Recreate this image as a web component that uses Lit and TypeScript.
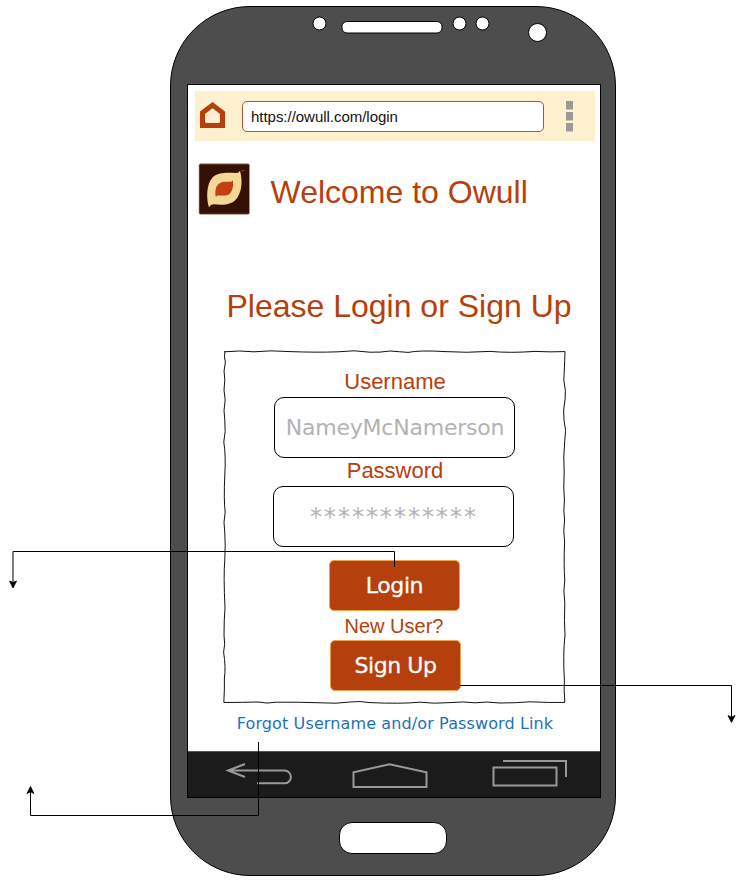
import { LitElement, html, css } from "lit";
import { customElement } from "lit/decorators.js";

@customElement("phone-bezel-top")
class PhoneBezelTop extends LitElement {
  static styles = css`
    :host { display: block; height: 77px; }
    svg { display: block; }
  `;
  render() {
    return html`<svg width="444" height="77" viewBox="171 7 444 77" fill="#fff" stroke="#000">
      <circle cx="319.5" cy="23.5" r="6.5" />
      <rect x="342" y="21.5" width="100" height="11.5" rx="5" />
      <circle cx="459.5" cy="23.5" r="6.5" />
      <circle cx="482.5" cy="23.5" r="6.5" />
      <circle cx="537.5" cy="32.5" r="9" />
    </svg>`;
  }
}

@customElement("address-bar")
class AddressBar extends LitElement {
  static styles = css`
    :host {
      display: flex; align-items: flex-start; box-sizing: border-box;
      width: 400px; height: 50px; margin: 6px 0 0 7px; background: #fff0cf;
    }
    .home { display: block; margin: 11px 0 0 5px; }
    .url {
      box-sizing: border-box; width: 302px; height: 31px; margin: 10px 0 0 17px;
      border: 1px solid #b2542f; border-radius: 5px; background: #fff;
      padding-left: 8px; font: 15px/30px "Liberation Sans", Arial, sans-serif;
      letter-spacing: -0.03px; color: #111;
    }
    .more { display: block; margin: 10px 0 0 22px; }
  `;
  render() {
    return html`
      <svg class="home" width="25" height="26" viewBox="0 0 25 26">
        <path fill="#b5400e" fill-rule="evenodd" d="M12.5 0L25 9.5V26H0V9.5ZM12.5 6.2L5 12V19.6Q5 21 6.5 21H18.5Q20 21 20 19.6V12Z" />
      </svg>
      <div class="url">https://owull.com/login</div>
      <svg class="more" width="7" height="31" viewBox="0 0 7 31" fill="#999">
        <rect y="0" width="7" height="8.5" /><rect y="11" width="7" height="8.5" /><rect y="22" width="7" height="8.5" />
      </svg>`;
  }
}

@customElement("login-panel")
class LoginPanel extends LitElement {
  static styles = css`
    :host {
      display: flex; flex-direction: column; position: relative; box-sizing: border-box;
      width: 343px; height: 354px; margin: 23px 0 0 35px; padding-top: 18px;
      font-family: "Liberation Sans", Arial, sans-serif; color: #b5400e;
    }
    .frame { position: absolute; left: 0; top: 0; }
    .label { width: 344px; text-align: center; font-size: 22px; line-height: 26px; height: 28px; }
    .label.user { height: 29px; line-height: 28px; }
    .label.new { width: 342px; font-size: 20px; height: 29px; line-height: 31px; }
    .field {
      box-sizing: border-box; width: 241px; height: 61px; margin-left: 51px;
      border: 1px solid #000; border-radius: 10px; background: #fff; text-align: center;
      font: 22px/59px "DejaVu Sans", Verdana, sans-serif; letter-spacing: -0.22px; color: #b3b3b3;
      padding-left: 1px;
    }
    .field.secret { margin-left: 50px; font-size: 24px; line-height: 61px; letter-spacing: 2px; }
    .btn {
      box-sizing: border-box; width: 131px; height: 51px; margin-left: 106px;
      border: 1px solid #eba24c; border-radius: 5px; background: #b5400e; text-align: center;
      font: 22px/49px "DejaVu Sans", Verdana, sans-serif; letter-spacing: -0.4px; color: #fff;
      -webkit-text-stroke: 0.3px #fff;
    }
    .btn.login { margin-top: 13px; }
    .btn.signup { margin-left: 107px; }
  `;
  render() {
    return html`
      <svg class="frame" width="343" height="354" viewBox="223 350 343 354" fill="none" stroke="#111" stroke-width="1">
        <path d="M224 351.8Q240 350.2 254 351.8Q270 350 290 351.6Q318 352.6 338 351.8Q354 349.6 370 352.2Q380 352.6 390 351Q400 351.8 408 352.4Q420 350 445 351.6Q466 353 490 351.4Q510 353.2 535 351.4Q550 352.2 565 351.6" />
        <path d="M565 351.6Q564.4 370 563.8 380Q566.4 391 565 400Q562.8 410 564 420Q566.8 431 564.8 440Q563 458 564.2 472Q563.2 488 564.4 500Q563.2 512 564.6 520Q563 530 564.6 542Q563.6 566 564.8 580Q563 590 564.8 603Q564 622 565 635Q562.8 655 564.4 680Q563.8 690 564.8 702" />
        <path d="M224 702.5Q244 702.4 258 702Q267 704 276 702.2Q300 702 320 702.8Q337 704 350 702Q360 700.8 370 702.6Q400 704 420 702.2Q434 704 450 702.6Q463 701.2 475 702.8Q486 701.2 500 703Q516 703 530 701.8Q550 702.8 565 702.4" />
        <path d="M225 351.5Q223.6 357 225.4 362Q223 371 224.8 380Q223 390 225.2 400Q223 411 224.8 420Q226 432 223.8 442Q226 456 224.8 475Q223.6 500 225.2 512Q223 522 224.8 533Q225.6 545 224.8 560Q223.4 575 225 608Q224 620 224 635Q225.6 645 223.6 652Q226 668 224.4 678Q224.6 690 223.8 702.5" />
      </svg>
      <div class="label user">Username</div>
      <div class="field">NameyMcNamerson</div>
      <div class="label">Password</div>
      <div class="field secret">************</div>
      <div class="btn login">Login</div>
      <div class="label new">New User?</div>
      <div class="btn signup">Sign Up</div>`;
  }
}

@customElement("nav-keys")
class NavKeys extends LitElement {
  static styles = css`
    :host { display: block; height: 46px; background: #1b1b1b; border-top: 1px solid #555; box-sizing: border-box; }
    svg { display: block; }
  `;
  render() {
    return html`<svg width="412" height="45" viewBox="188 752 412 45" fill="none" stroke="#999" stroke-width="2">
      <path d="M229 770.500H284.500A6.400 6.400 0 0 1 284.500 783.300H257M245 764L228 770.500L245 777" />
      <path d="M353.500 787V772.300L389.500 764.300L426.500 772.300V787Z" />
      <path d="M493.500 767.500H556.500V785.500H493.500ZM503 761H566V777" />
    </svg>`;
  }
}

@customElement("app-root")
class AppRoot extends LitElement {
  static styles = css`
    :host {
      display: block; position: relative; box-sizing: border-box; width: 747px; height: 884px;
      padding: 6px 0 0 170px; background: #fff; overflow: hidden;
    }
    .phone {
      display: flex; flex-direction: column; box-sizing: border-box; width: 446px; height: 870px;
      border: 1px solid #000; border-radius: 80px; background: #4d4d4d;
    }
    .screen {
      display: flex; flex-direction: column; box-sizing: border-box; width: 414px; height: 714px;
      margin-left: 16px; border: 1px solid #000; background: #fff;
    }
    .brand { display: flex; align-items: flex-start; height: 74px; padding: 22px 0 0 10px; }
    .logo { display: block; flex: none; }
    .title, .prompt { font: 32px/36px "Liberation Sans", Arial, sans-serif; color: #b5400e; white-space: nowrap; }
    .title { margin: 11px 0 0 20.5px; }
    .prompt { margin-top: 51px; height: 39px; padding-left: 10px; text-align: center; }
    .forgot {
      width: 414px; flex: 1; font: 16px/39px "DejaVu Sans", Verdana, sans-serif;
      letter-spacing: 0.12px; color: #1c70c0; text-align: center; white-space: nowrap;
    }
    .key {
      box-sizing: border-box; width: 108px; height: 32px; margin: 24px 0 0 168px;
      border: 1px solid #000; border-radius: 13px; background: #fff;
    }
    .links { position: absolute; left: 0; top: 0; }
  `;
  render() {
    return html`
      <div class="phone">
        <phone-bezel-top></phone-bezel-top>
        <div class="screen">
          <address-bar></address-bar>
          <div class="brand">
            <svg class="logo" width="52" height="52" viewBox="198 163 52 52">
              <rect x="199" y="163.800" width="50.500" height="50.500" rx="1.500" fill="#351005" stroke="#b99b90" stroke-width=".7" />
              <path fill="#f5d796" d="M240 170.800C242.500 180 242.200 190 237.500 197.500C231.500 206 222 205 214 204.300Q210.500 204.300 209 207.500C206 198 206.500 184 212.500 177.500C219 171.500 229 173 236 173Q239 173 240 170.800Z" />
              <path fill="#c14210" d="M233 180.500C233.500 186 232.500 191 229.500 194C226 196.500 221 195 217.500 195.500L215.700 196.800C215 192 215.200 187 218.500 184C222 180.500 227 182 231 181.700Z" />
              <path stroke="#a85a35" stroke-width=".8" d="M241.500 170.700H244.500" />
            </svg>
            <div class="title">Welcome to Owull</div>
          </div>
          <div class="prompt">Please Login or Sign Up</div>
          <login-panel></login-panel>
          <div class="forgot">Forgot Username and/or Password Link</div>
          <nav-keys></nav-keys>
        </div>
        <div class="key"></div>
      </div>
      <svg class="links" width="747" height="884" fill="none" stroke="#000">
        <path d="M394.500 567V551.500H13V583M460 685.500H731.500V717M258.500 742V815.500H30.500V791" />
        <path fill="#000" stroke-width=".8" stroke-linejoin="round" d="M13 588L9.500 581L13 582.500L16.500 581ZM731.500 722.500L728 715.500L731.500 717.300L735 715.500ZM30.500 786.500L27 793.500L30.500 791.800L34 793.500Z" />
      </svg>`;
  }
}
